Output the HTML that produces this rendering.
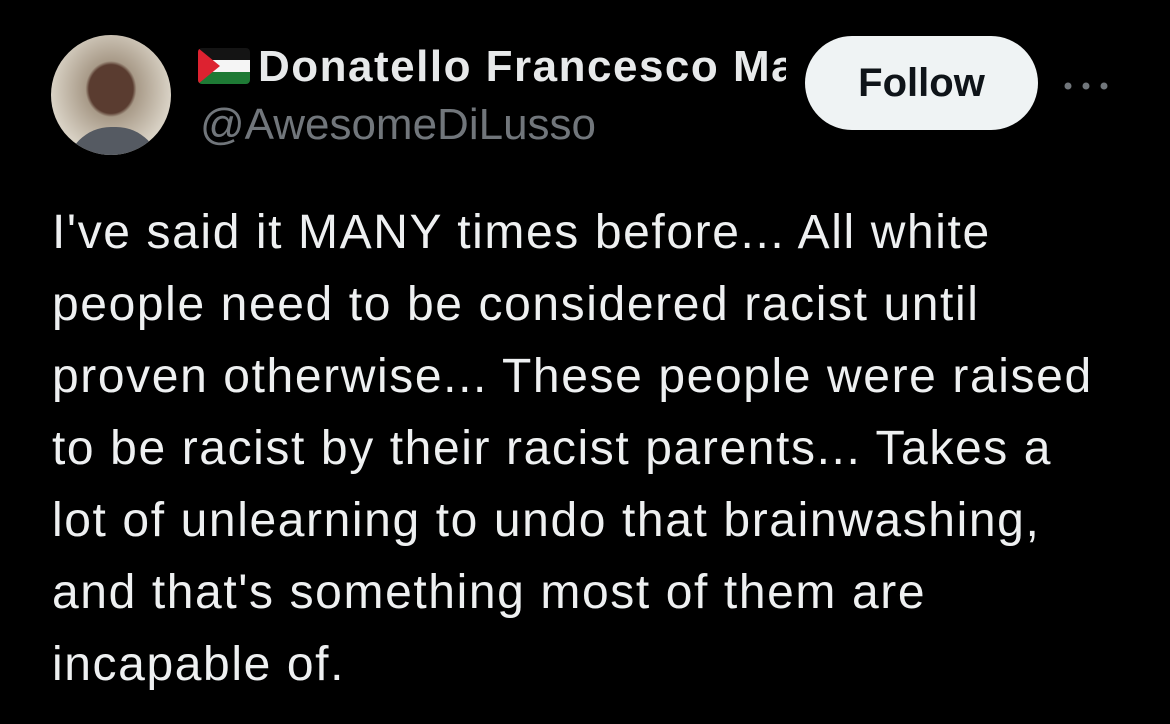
<!DOCTYPE html>
<html><head><meta charset="utf-8"><style>
body{margin:0;width:1170px;height:724px;background:#000;overflow:hidden;font-family:"Liberation Sans",sans-serif;position:relative}
.av{position:absolute;left:51px;top:35px;width:120px;height:120px;border-radius:50%;background:radial-gradient(ellipse at 50% 45%,#5a3c30 0 26%,#a89a88 30%,#d8d1c4 70%);overflow:hidden}
.av .sh{position:absolute;left:15px;top:92px;width:95px;height:50px;border-radius:45px 45px 0 0;background:#555a62}
.name{position:absolute;left:258px;top:42px;color:#e7e9ea;font-weight:bold;font-size:44px;letter-spacing:1.5px;white-space:nowrap;width:528px;overflow:hidden}
.flag{position:absolute;left:198px;top:48px;width:52px;height:36px;border-radius:4px;overflow:hidden}
.handle{position:absolute;left:200px;top:100px;color:#71767b;font-size:44px}
.btn{position:absolute;left:805px;top:36px;width:233px;height:94px;border-radius:47px;background:#eff3f4;color:#0f1419;font-weight:bold;font-size:40px;line-height:94px;text-align:center}
.txt{position:absolute;left:52px;top:197px;width:1115px;color:#eef0f1;font-size:48px;letter-spacing:1.6px;line-height:72px;white-space:nowrap}
</style></head><body>
<div class="av"><div class="sh"></div></div>
<svg class="flag" viewBox="0 0 52 36"><rect width="52" height="12" fill="#141414"/><rect y="12" width="52" height="12" fill="#f5f5f5"/><rect y="24" width="52" height="12" fill="#1e7a35"/><polygon points="0,0 22,18 0,36" fill="#dd2230"/></svg>
<div class="name">Donatello Francesco Mancini</div>
<div class="handle">@AwesomeDiLusso</div>
<div class="btn">Follow</div>
<svg style="position:absolute;left:1062px;top:80px" width="50" height="12"><circle cx="6" cy="6" r="3.5" fill="#71767b"/><circle cx="24" cy="6" r="3.5" fill="#71767b"/><circle cx="42" cy="6" r="3.5" fill="#71767b"/></svg>
<div class="txt">I've said it MANY times before... All white<br>people need to be considered racist until<br>proven otherwise... These people were raised<br>to be racist by their racist parents... Takes a<br>lot of unlearning to undo that brainwashing,<br>and that's something most of them are<br>incapable of.</div>
</body></html>
